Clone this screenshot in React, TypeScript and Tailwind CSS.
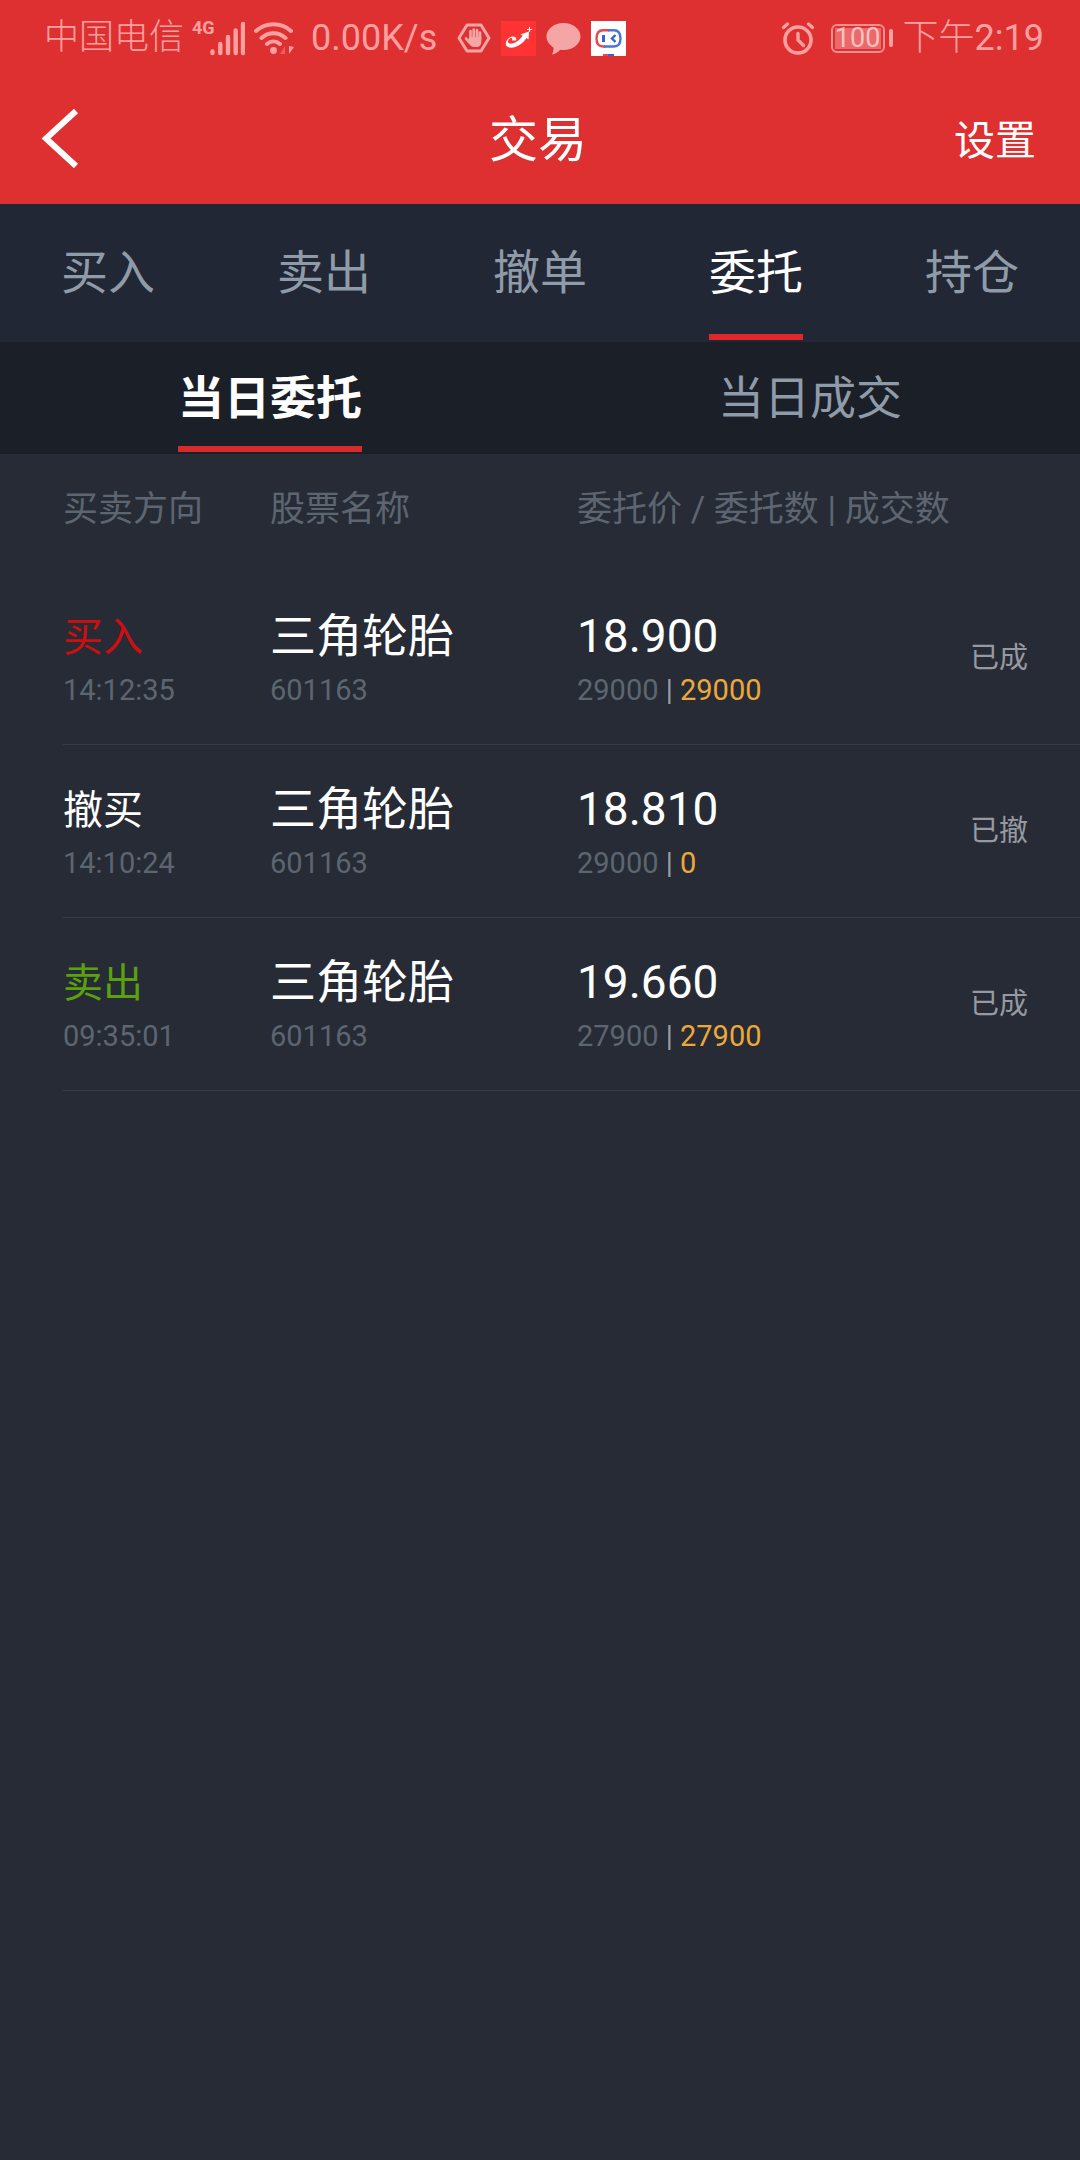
import { useState } from 'react';

type Order = {
  side: string;
  sideClass: string;
  time: string;
  name: string;
  code: string;
  price: string;
  amount: string;
  filled: string;
  status: string;
};

const TABS = ['买入', '卖出', '撤单', '委托', '持仓'];
const SUB_TABS = ['当日委托', '当日成交'];

const ORDERS: Order[] = [
  {
    side: '买入',
    sideClass: 'text-[#cc0f10]',
    time: '14:12:35',
    name: '三角轮胎',
    code: '601163',
    price: '18.900',
    amount: '29000',
    filled: '29000',
    status: '已成',
  },
  {
    side: '撤买',
    sideClass: 'text-white',
    time: '14:10:24',
    name: '三角轮胎',
    code: '601163',
    price: '18.810',
    amount: '29000',
    filled: '0',
    status: '已撤',
  },
  {
    side: '卖出',
    sideClass: 'text-[#5aa00f]',
    time: '09:35:01',
    name: '三角轮胎',
    code: '601163',
    price: '19.660',
    amount: '27900',
    filled: '27900',
    status: '已成',
  },
];

export default function App() {
  const [tab, setTab] = useState('委托');
  const [subTab, setSubTab] = useState('当日委托');

  return (
    <div className="min-h-screen bg-[#262b36] font-['Roboto','Noto_Sans_CJK_SC',sans-serif] text-white">
      <header className="bg-[#de3031]">
        <StatusBar />
        <div className="grid h-32 grid-cols-3 items-center pr-11 pl-10">
          <button aria-label="返回" className="justify-self-start">
            <BackIcon />
          </button>
          <h1 className="pt-0.5 text-center text-[49px] leading-16">交易</h1>
          <button className="justify-self-end pt-0.5 text-[41px] leading-16">设置</button>
        </div>
      </header>

      {/* Main tabs */}
      <nav className="grid h-[138px] grid-cols-5 bg-[#222735]">
        {TABS.map((t) => (
          <button
            key={t}
            onClick={() => setTab(t)}
            aria-pressed={tab === t}
            className={[
              'mb-0.5 justify-self-center border-t-8 border-b-6 border-t-transparent text-[47px] leading-16',
              tab === t ? 'border-b-[#e02729] text-white' : 'border-b-transparent text-[#8f9ba8]',
            ].join(' ')}
          >
            {t}
          </button>
        ))}
      </nav>

      {/* Today's orders / today's deals */}
      <nav className="grid h-28 grid-cols-2 bg-[#1b1f28]">
        {SUB_TABS.map((t) => (
          <button
            key={t}
            onClick={() => setSubTab(t)}
            aria-pressed={subTab === t}
            className={[
              'mb-0.5 justify-self-center border-t-8 border-b-6 border-t-transparent text-[46px] leading-16',
              subTab === t ? 'border-b-[#d62a2b] font-bold text-white' : 'border-b-transparent text-[#8f9ba8]',
            ].join(' ')}
          >
            {t}
          </button>
        ))}
      </nav>

      <main className="pl-[63px]">
        <table className="w-full table-fixed border-collapse text-left">
          <colgroup>
            <col className="w-[207px]" />
            <col className="w-[307px]" />
            <col />
            <col className="w-40" />
          </colgroup>
          <thead>
            <tr className="h-[118px] text-[35px] leading-12 text-[#5d6571]">
              <th className="pb-1.5 font-normal">买卖方向</th>
              <th className="pb-1.5 font-normal">股票名称</th>
              <th colSpan={2} className="pb-1.5 font-normal">
                委托价 / 委托数 | 成交数
              </th>
            </tr>
          </thead>
          <tbody>
            {ORDERS.map((o) => (
              <OrderRow key={o.time} order={o} />
            ))}
          </tbody>
        </table>
      </main>
    </div>
  );
}

function OrderRow({ order }: { order: Order }) {
  return (
    <tr className="border-b border-[#353b47]">
      <td className="pt-[34px] pb-[30px]">
        <p className={`text-[40px] leading-16 ${order.sideClass}`}>{order.side}</p>
        <p className="pb-1 text-[29px] leading-10 text-[#5d6571]">{order.time}</p>
      </td>
      <td className="pt-[34px] pb-[30px]">
        <p className="text-[46px] leading-15">{order.name}</p>
        <p className="text-[29px] leading-12 text-[#5d6571]">{order.code}</p>
      </td>
      <td className="pt-[34px] pb-[30px]">
        <p className="text-[46px] leading-15">{order.price}</p>
        <p className="text-[29px] leading-12 text-[#5d6571]">
          {order.amount} <span className="text-[#9a9da4]">|</span>{' '}
          <span className="text-[#eda83a]">{order.filled}</span>
        </p>
      </td>
      <td className="pr-[52px] text-right text-[29px] leading-12 text-[#96999f]">{order.status}</td>
    </tr>
  );
}

function StatusBar() {
  return (
    <div className="flex h-19 items-center justify-between pr-9 pl-11 text-[36px] leading-12 text-[#ffa0a0]">
      <div className="flex items-center">
        <span className="text-[35px] font-light">中国电信</span>
        <SignalIcon />
        <WifiIcon />
        <span className="ml-4">0.00K/s</span>
        <div className="ml-5 flex items-center gap-2.5">
          <HandIcon />
          <ArrowAppIcon />
          <ChatIcon />
          <RobotIcon />
        </div>
      </div>
      <div className="flex items-center">
        <AlarmIcon />
        <Battery level={100} />
        <span className="ml-2.5">
          <span className="font-light">下午</span>2:19
        </span>
      </div>
    </div>
  );
}

/* ---------- icons ---------- */

function BackIcon() {
  return (
    <svg width="40" height="64" viewBox="0 0 40 64" fill="none" aria-hidden="true">
      <path d="M36 3 6 30.500l30 27.500" stroke="currentColor" strokeWidth="6" />
    </svg>
  );
}

function SignalIcon() {
  return (
    <div className="ml-2 flex items-start">
      <span className="w-4 font-['Roboto',sans-serif] text-[18px] leading-4 font-bold">4G</span>
      <svg width="37" height="36" viewBox="0 0 37 36" aria-hidden="true">
        <g stroke="currentColor" strokeWidth="4.4" strokeLinecap="round">
          <path d="M4.5 31.5v1.5M12.3 24v9M20 17v16M27.700 10.500V33M35 4v29" />
        </g>
      </svg>
    </div>
  );
}

function WifiIcon() {
  return (
    <svg className="ml-2" width="42" height="36" viewBox="0 0 42 36" fill="none" aria-hidden="true">
      <g stroke="currentColor" strokeWidth="4" strokeLinecap="round">
        <path d="M3 11c10-9 25-9 35 0M8.500 18c7-6.500 17-6.500 24 0M14 24c4-3.500 9-3.500 13 0" />
      </g>
      <circle cx="20.500" cy="30.500" r="3.400" fill="currentColor" />
      <path d="M32 26v8h-5z" fill="currentColor" opacity=".4" />
      <path d="M36 26v8l5-7z" fill="currentColor" />
    </svg>
  );
}

function HandIcon() {
  return (
    <svg width="34" height="36" viewBox="0 0 34 36" fill="none" aria-hidden="true">
      <path d="M10 5h14l8 13-8 13H10L2 18z" stroke="#f5a5a5" strokeWidth="3" strokeLinejoin="round" />
      <g stroke="#f5a5a5" strokeWidth="2.700" strokeLinecap="round">
        <path d="M13.500 19v-8M16.700 18V9.500M20 18v-8M23 19v-6.500M12 22l-3-3.500" />
      </g>
      <path d="M12.200 17h12.200v4c0 3.500-1.500 6-4.500 6h-2.500c-3 0-4.500-2-6.500-5z" fill="#f5a5a5" />
    </svg>
  );
}

function ArrowAppIcon() {
  return (
    <svg width="35" height="35" viewBox="0 0 35 35" fill="none" aria-hidden="true">
      <path fill="#ff3333" d="M0 0h35v35H0z" />
      {/* swirl that grows into the arrow */}
      <path
        d="M15 19.500c1.500-3.500-2-5-5.500-3.500-4 1.800-6.500 7.500-3 9.800 5.500 2.800 14.500-1.500 19-8.800l2 1.500.5-8-8.500 3 2.200 1.300c-3.500 5-9 8.700-13.200 7.700-2.500-.8-1.500-4.300.8-5.300 1.700-.6 2.600.3 1.700 2.300z"
        fill="#fff"
      />
      <path d="M28.500 6v5M26 8.500h5" stroke="#fff" />
    </svg>
  );
}

function ChatIcon() {
  return (
    <svg width="35" height="35" viewBox="0 0 35 35" aria-hidden="true">
      <path
        fill="#f5a5a5"
        d="M17.500 2C27 2 34.500 8 34.500 15.500S27 29 17.500 29c-1.200 0-2.200-.1-3.300-.3-2 2.400-4.700 4.300-8.200 4.800 1-2 1.800-4.500 1.400-7C3.500 24 .5 20 .5 15.500.5 8 8 2 17.500 2Z"
      />
    </svg>
  );
}

function RobotIcon() {
  return (
    <svg width="35" height="35" viewBox="0 0 35 35" fill="none" aria-hidden="true">
      <path fill="#fff" d="M0 0h35v35H0z" />
      <path d="M18 9.200h-6c-4 0-6.500 3-6.500 8.300s2.500 8 6.500 8h2" stroke="#e04a50" strokeWidth="2.400" />
      <path d="M17 9.200h6c4.500 0 6.500 3 6.500 8.300s-2 8-6.500 8H13" stroke="#4a74d8" strokeWidth="2.400" />
      <path d="M12.500 14v7" stroke="#3566cc" strokeWidth="3" />
      <path d="m24.500 14-3.500 3.500 3.500 3.500" stroke="#3566cc" strokeWidth="2.400" />
      <path fill="#e04a50" d="M12 33h6v2h-6z" />
      <path fill="#3566cc" d="M17 33h6v2h-6z" />
    </svg>
  );
}

function AlarmIcon() {
  return (
    <svg width="34" height="36" viewBox="0 0 34 36" fill="none" aria-hidden="true">
      <circle cx="17" cy="20" r="13" stroke="currentColor" strokeWidth="3.600" />
      <g stroke="currentColor" strokeWidth="3.400" strokeLinecap="round">
        <path d="M17 13.500V20l5.500 5.500M2.500 7.500 6.500 4M31.500 7.500 27.500 4" />
      </g>
    </svg>
  );
}

function Battery({ level }: { level: number }) {
  return (
    <div className="ml-4 flex items-center gap-1">
      <div className="flex h-[29px] w-[54px] rounded-md border-2 border-[#f98f8f] p-0.5">
        <span className="flex flex-1 items-center justify-center bg-[#e86a6a] text-[27px] leading-5 text-[#ffc0c0]">
          {level}
        </span>
      </div>
      <div className="h-[18px] w-1 rounded-full bg-[#ffa0a0]" />
    </div>
  );
}
